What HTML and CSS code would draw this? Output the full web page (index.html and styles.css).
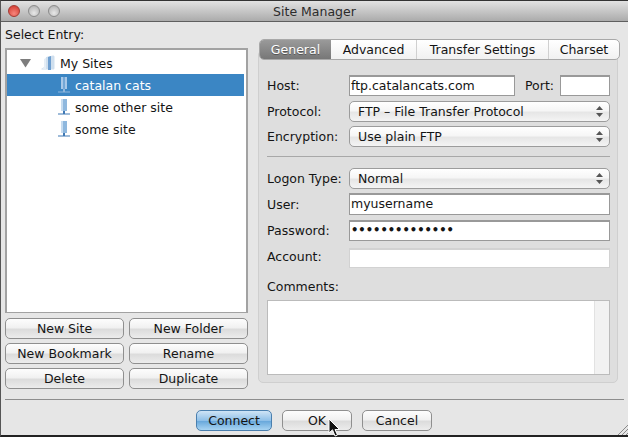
FILE: index.html
```html
<!DOCTYPE html>
<html lang="en">
<head>
<meta charset="utf-8">
<title>Site Manager</title>
<link rel="stylesheet" href="styles.css">
</head>
<body>
<div class="window">
  <header class="titlebar">
    <span class="light light-red"></span>
    <span class="light"></span>
    <span class="light"></span>
    <span class="title">Site Manager</span>
  </header>
  <div class="main">
    <section class="left">
      <div class="select-label">Select Entry:</div>
      <div class="tree">
        <div class="row row-root">
          <svg class="arrow" width="13" height="10" viewBox="0 0 13 10"><path d="M1 1h11L6.500 9.500z" fill="#7d7d7d"/></svg>
          <svg class="folder" width="14" height="16" viewBox="0 0 14 16"><path d="M5 2l7-1.500c1 0 1.500 .5 1.500 1.500v11c0 1-.5 1.500-1.500 1.500H2c-1 0-1.500-.5-1.500-1l3-1.500z" fill="#cfdfee"/><path d="M7 2l3-1v14H7z" fill="#6f9fd0"/><path d="M0 15l3-3V4l2-1v12z" fill="#e6eef6"/></svg>
          <span>My Sites</span>
        </div>
        <div class="row row-site row-selected">
          <svg class="server" width="12" height="16" viewBox="0 0 12 16"><rect x="3" y="0" width="6" height="12" fill="#a8c8e8"/><rect x="5.500" y="0" width="1" height="12" fill="#3f86c4"/><path d="M0 14.500h12v1H0zM5 12h2v3H5z" fill="#8fb6dc"/></svg>
          <span>catalan cats</span>
        </div>
        <div class="row row-site">
          <svg class="server" width="12" height="16" viewBox="0 0 12 16"><rect x="3" y="0" width="6" height="12" fill="#8fb8de"/><rect x="3" y="0" width="2" height="12" fill="#c6dcf0"/><path d="M0 14.500h12v1H0zM5 12h2v3H5z" fill="#3f78b4"/></svg>
          <span>some other site</span>
        </div>
        <div class="row row-site">
          <svg class="server" width="12" height="16" viewBox="0 0 12 16"><rect x="3" y="0" width="6" height="12" fill="#8fb8de"/><rect x="3" y="0" width="2" height="12" fill="#c6dcf0"/><path d="M0 14.500h12v1H0zM5 12h2v3H5z" fill="#3f78b4"/></svg>
          <span>some site</span>
        </div>
      </div>
      <div class="site-buttons">
        <button class="btn">New Site</button>
        <button class="btn">New Folder</button>
        <button class="btn">New Bookmark</button>
        <button class="btn">Rename</button>
        <button class="btn">Delete</button>
        <button class="btn">Duplicate</button>
      </div>
    </section>
    <section class="right">
      <nav class="tabs">
        <span class="tab tab-active tab-general">General</span>
        <span class="tab tab-advanced">Advanced</span>
        <span class="tab tab-transfer">Transfer Settings</span>
        <span class="tab tab-charset">Charset</span>
      </nav>
      <div class="panel">
        <div class="field field-host">
          <label>Host:</label>
          <div class="input input-host">ftp.catalancats.com</div>
          <label class="port-label">Port:</label>
          <div class="input input-port"></div>
        </div>
        <div class="field field-protocol">
          <label>Protocol:</label>
          <div class="select">FTP – File Transfer Protocol<svg class="updown" width="7" height="11" viewBox="0 0 7 11"><path d="M3.500 0L7 4H0zM3.500 11L0 7h7z" fill="#555"/></svg></div>
        </div>
        <div class="field field-encryption">
          <label>Encryption:</label>
          <div class="select">Use plain FTP<svg class="updown" width="7" height="11" viewBox="0 0 7 11"><path d="M3.500 0L7 4H0zM3.500 11L0 7h7z" fill="#555"/></svg></div>
        </div>
        <hr class="rule">
        <div class="field field-logon">
          <label>Logon Type:</label>
          <div class="select">Normal<svg class="updown" width="7" height="11" viewBox="0 0 7 11"><path d="M3.500 0L7 4H0zM3.500 11L0 7h7z" fill="#555"/></svg></div>
        </div>
        <div class="field field-user">
          <label>User:</label>
          <div class="input input-wide">myusername</div>
        </div>
        <div class="field field-password">
          <label>Password:</label>
          <div class="input input-wide input-dots">••••••••••••••</div>
        </div>
        <div class="field field-account">
          <label>Account:</label>
          <div class="input input-wide input-disabled"></div>
        </div>
        <div class="comments-label">Comments:</div>
        <div class="comments"><div class="scrollbar"></div></div>
      </div>
    </section>
  </div>
  <hr class="footer-rule">
  <footer class="footer">
    <button class="btn btn-default">Connect</button>
    <button class="btn btn-action">OK</button>
    <button class="btn btn-action">Cancel</button>
    <svg class="cursor" width="13" height="20" viewBox="0 0 13 20"><path d="M1 1v14l3.500-3.200L7 18l2.500-1-2.500-5.500h4.500z" fill="#111" stroke="#fff" stroke-width="1"/></svg>
    <svg class="grip" width="11" height="11" viewBox="0 0 11 11"><path d="M1 11L11 1M5 11l6-6M9 11l2-2" stroke="#8a8a8a" fill="none"/></svg>
  </footer>
</div>
</body>
</html>
```
FILE: styles.css
```css
* { box-sizing: border-box; }
html, body { margin: 0; padding: 0; background: #1a1a1a; }
body { width: 628px; height: 437px; overflow: hidden; font-family: "DejaVu Sans", sans-serif; font-size: 12.500px; color: #141414; }
.window { position: relative; width: 628px; height: 437px; background: #e6e6e6; display: flex; flex-direction: column; border-top: 1px solid #333; border-bottom: 2px solid #222; border-left: 1px solid #555; }
.titlebar { height: 21px; flex: none; display: flex; align-items: center; position: relative; padding-left: 7px; gap: 8px; background: linear-gradient(#e2e2e2, #ababab); border-bottom: 1px solid #5f5f5f; }
.light { width: 12px; height: 12px; border-radius: 50%; background: radial-gradient(circle at 50% 70%, #e8e8e8, #a9a9a9); border: 1px solid #8b8b8b; }
.light-red { background: radial-gradient(circle at 50% 75%, #f7867c, #cf3328); border-color: #a33a33; }
.title { position: absolute; left: 0; right: 0; text-align: center; font-size: 12.500px; color: #2c2c2c; }
.main { height: 377px; flex: none; display: flex; }
.footer-rule { flex: none; height: 1px; border: 0; margin: 0 4px; background: #8d8d8d; }
.left { width: 243px; margin-left: 4px; flex: none; }
.select-label { height: 26px; padding-top: 4px; line-height: 17px; }
.tree { height: 265px; background: #fff; border: 1px solid #9b9b9b; border-width: 2px 2px 1px 2px; border-color: #a2a2a2; padding-top: 2px; margin-right: 0; }
.row { height: 22px; display: flex; align-items: center; width: 237px; }
.row-root { padding-left: 12px; }
.arrow { margin-right: 9px; }
.folder { margin-right: 5px; }
.row-site { padding-left: 51px; }
.server { margin-right: 5px; }
.row-selected { background: #3b86c4; color: #fff; }
.site-buttons { display: grid; grid-template-columns: 119px 119px; column-gap: 5px; row-gap: 4px; margin-top: 5px; }
.btn { height: 21px; padding: 0; font: inherit; color: #141414; background: linear-gradient(#fdfdfd, #f1f1f1 45%, #dcdcdc 55%, #ececec); border: 1px solid #8f8f8f; border-radius: 5px; }
.right { width: 360px; margin-left: 10px; padding-top: 17px; flex: none; }
.tabs { position: relative; z-index: 1; display: flex; width: 361px; margin-left: 1px; height: 21px; margin-bottom: -10px; background: linear-gradient(#fff, #f1f1f1); border: 1px solid #a8a8a8; border-radius: 5px; }
.tab { display: flex; align-items: center; justify-content: center; border-left: 1px solid #d0d0d0; }
.tab-active { border-left: 0; color: #fff; background: linear-gradient(#9a9a9a, #777); border-radius: 4px 0 0 4px; text-shadow: 0 1px 0 #555; }
.tab-general { width: 71px; }
.tab-advanced { width: 85px; border-left: 0; }
.tab-transfer { width: 132px; }
.tab-charset { width: 71px; }
.panel { height: 333px; background: #dedede; border: 1px solid #cfcfcf; border-radius: 5px; padding: 24px 7px 0 8px; }
.field { display: flex; align-items: center; }
.field label { width: 82px; flex: none; }
.field-host { height: 21px; margin-bottom: 5px; }
.input { background: #fff; border: 1px solid #999; border-top-width: 2px; height: 100%; line-height: 17px; padding-left: 1px; }
.input-host { width: 166px; }
.field label.port-label { width: 35px; margin-left: 10px; }
.input-port { width: 50px; }
.select { position: relative; width: 261px; height: 21px; line-height: 19px; padding-left: 8px; background: linear-gradient(#fff, #f6f6f6 45%, #e6e6e6 55%, #f4f4f4); border: 1px solid #9c9c9c; border-radius: 5px; }
.updown { position: absolute; right: 6px; top: 4px; }
.field-protocol { height: 21px; margin-bottom: 4px; }
.field-encryption { height: 21px; }
.rule { border: 0; border-top: 1px solid #a8a8a8; margin: 9px 0 11px; height: 0; }
.field-logon { height: 21px; margin-bottom: 4px; }
.field-user { height: 22px; margin-bottom: 5px; }
.field-password { height: 21px; margin-bottom: 7px; }
.field-account { height: 20px; }
.field-account label { padding-bottom: 3px; }
.input-wide { width: 261px; }
.input-dots { font-size: 11.500px; font-weight: 700; }
.input-disabled { border-color: #d2d2d2; }
.comments-label { margin-top: 10px; height: 22px; line-height: 17px; }
.comments { position: relative; height: 75px; width: 343px; background: #fff; border: 1px solid #bbb; }
.scrollbar { position: absolute; right: 0; top: 0; bottom: 0; width: 15px; background: #f2f2f2; border-left: 1px solid #e2e2e2; }
.footer { flex: 1; position: relative; display: flex; align-items: flex-start; padding: 10px 0 0 195px; gap: 10px; }
.footer .btn { height: 21px; }
.btn-default { width: 76px; background: linear-gradient(#cfe4f6, #8fc0e8 50%, #6aa9dc 55%, #a8d4f2); border-color: #4a7fae; }
.btn-action { width: 70px; }
.cursor { position: absolute; left: 327px; top: 18px; }
.grip { position: absolute; right: 0; bottom: 0; }
```
